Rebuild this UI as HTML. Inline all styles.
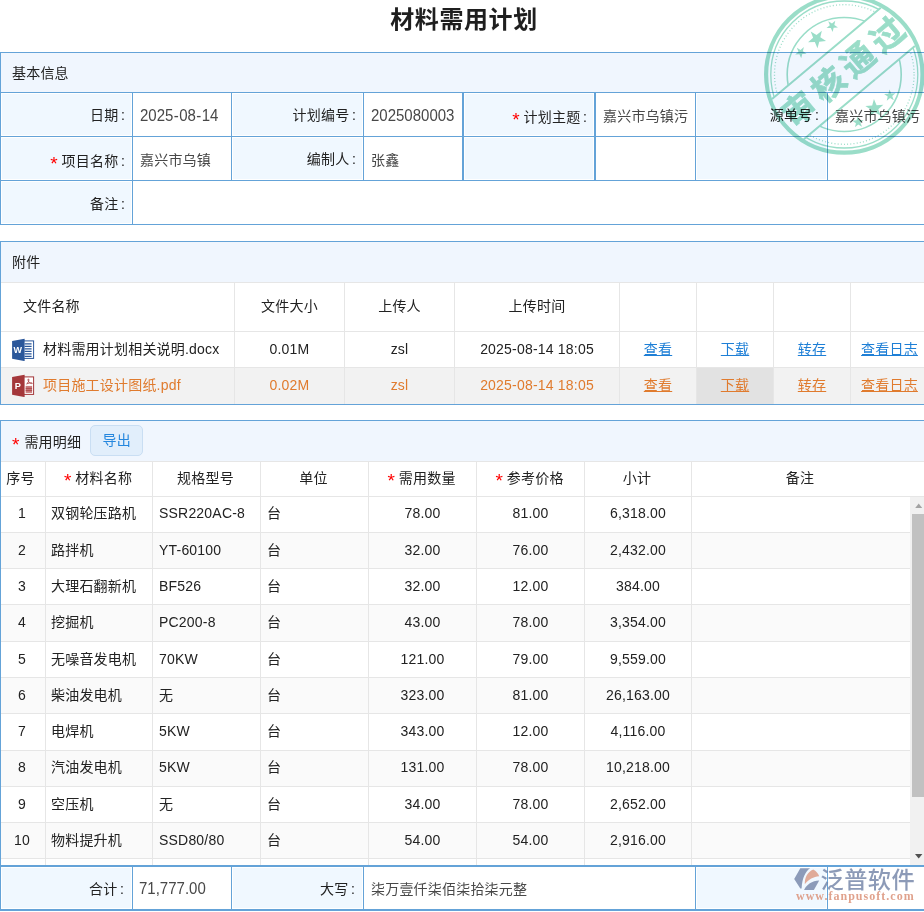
<!DOCTYPE html>
<html lang="zh-CN">
<head>
<meta charset="utf-8">
<title>材料需用计划</title>
<style>
*{box-sizing:border-box;margin:0;padding:0}
html,body{width:924px;height:912px;overflow:hidden;background:#fff}
body{position:relative;font-family:"Liberation Sans","Noto Sans CJK SC",sans-serif;font-size:14px;color:#222}
h1{position:absolute;left:2px;top:3.5px;width:924px;text-align:center;font-size:24px;line-height:32px;font-weight:bold;color:#1f1f1f;letter-spacing:.6px}
.ln{position:absolute;display:block}
.c{position:absolute;display:flex;align-items:center;white-space:nowrap;overflow:hidden;font-size:14px;line-height:20px;letter-spacing:.2px}
.ph{background:#f0f6fe;padding-left:12px;padding-top:2px;color:#222;border-bottom:1px solid #fff}
.req{color:#f00;font-family:"Liberation Sans",sans-serif;font-size:19px;line-height:20px;position:relative;top:3px;margin-right:4px;letter-spacing:0}
.co{margin-left:2.5px}
.hy{margin:0 .4px}
.fl,.fl2,.fl3{background:#f0f8ff;justify-content:flex-end;padding-right:6px;color:#222;border:1px solid #fff}
.fl2{padding-top:4px}
.fl3{padding-right:7px}
.fv{background:#fff;padding-left:7px;padding-top:2px;color:#484848}
.num{font-size:15px;letter-spacing:0;display:inline-block;transform:scaleY(1.09);transform-origin:50% 78%}
.ph.p0{padding-top:0}
.ah{justify-content:center;color:#222;background:#fff;padding-bottom:2px}
.ah.an{justify-content:flex-start;padding-left:22px}
.ar{justify-content:center;color:#222;background:#fff;padding-bottom:2px}
.ar.an2{justify-content:flex-start;padding-left:11px}
.ar a{color:#1e7fd6;text-decoration:underline}
.ar.hov{background:#f2f2f2;color:#e07b2e}
.ar.hov a{color:#e07b2e}
.ar.hov.dk{background:#e2e2e2}
.ic{flex:none;margin-right:8px}
.btn{display:inline-block;position:relative;top:-1px;margin-left:9px;width:53px;height:31px;line-height:29px;text-align:center;border:1px solid #c9def3;border-radius:5px;background:#e1eefb;color:#2587de}
.dh{justify-content:center;background:#fff;color:#222;padding-bottom:2px;padding-right:2px}
.dh.h0{padding-right:5px}
.dc{justify-content:center;padding-bottom:4px}
.dc.d0{padding-right:2px}
.dl{justify-content:flex-start;padding-left:6px;padding-bottom:4px}
.dl.d1{padding-left:5px}
</style>
</head>
<body>
<h1>材料需用计划</h1>
<div class="c ph" style="left:0px;top:52px;width:924px;height:41px;">基本信息</div>
<div class="c fl" style="left:1px;top:93px;width:131px;height:43px;"><span>日期<span class="co">:</span></span></div>
<div class="c fv" style="left:133px;top:93px;width:98px;height:43px;"><span class="num">2025<span class="hy">-</span>08<span class="hy">-</span>14</span></div>
<div class="c fl" style="left:232px;top:93px;width:131px;height:43px;"><span>计划编号<span class="co">:</span></span></div>
<div class="c fv" style="left:364px;top:93px;width:98px;height:43px;"><span class="num">2025080003</span></div>
<div class="c fl2" style="left:464px;top:93px;width:130px;height:43px;"><span class="req">*</span><span>计划主题<span class="co">:</span></span></div>
<div class="c fv" style="left:596px;top:93px;width:99px;height:43px;">嘉兴市乌镇污</div>
<div class="c fl3" style="left:696px;top:93px;width:131px;height:43px;"><span>源单号<span class="co">:</span></span></div>
<div class="c fv" style="left:828px;top:93px;width:96px;height:43px;">嘉兴市乌镇污</div>
<div class="c fl2" style="left:1px;top:137px;width:131px;height:43px;"><span class="req">*</span><span>项目名称<span class="co">:</span></span></div>
<div class="c fv" style="left:133px;top:137px;width:98px;height:43px;">嘉兴市乌镇</div>
<div class="c fl" style="left:232px;top:137px;width:131px;height:43px;"><span>编制人<span class="co">:</span></span></div>
<div class="c fv" style="left:364px;top:137px;width:98px;height:43px;">张鑫</div>
<div class="c fl" style="left:464px;top:137px;width:130px;height:43px;"></div>
<div class="c fv" style="left:596px;top:137px;width:99px;height:43px;"></div>
<div class="c fl" style="left:696px;top:137px;width:131px;height:43px;"></div>
<div class="c fv" style="left:828px;top:137px;width:96px;height:43px;"></div>
<div class="c fl" style="left:1px;top:181px;width:131px;height:43px;padding-top:2px"><span>备注<span class="co">:</span></span></div>
<div class="c fv" style="left:133px;top:181px;width:791px;height:43px;"></div>
<div class="ln" style="left:0px;top:52px;width:924px;height:1px;background:#64a3d8"></div>
<div class="ln" style="left:0px;top:92px;width:924px;height:1px;background:#64a3d8"></div>
<div class="ln" style="left:0px;top:136px;width:924px;height:1px;background:#64a3d8"></div>
<div class="ln" style="left:0px;top:180px;width:924px;height:1px;background:#64a3d8"></div>
<div class="ln" style="left:0px;top:224px;width:924px;height:1px;background:#64a3d8"></div>
<div class="ln" style="left:0px;top:52px;width:1px;height:173px;background:#64a3d8"></div>
<div class="ln" style="left:132px;top:93px;width:1px;height:131px;background:#64a3d8"></div>
<div class="ln" style="left:231px;top:93px;width:1px;height:87px;background:#64a3d8"></div>
<div class="ln" style="left:363px;top:93px;width:1px;height:87px;background:#64a3d8"></div>
<div class="ln" style="left:462px;top:93px;width:2px;height:87px;background:#64a3d8"></div>
<div class="ln" style="left:594px;top:93px;width:2px;height:87px;background:#64a3d8"></div>
<div class="ln" style="left:695px;top:93px;width:1px;height:87px;background:#64a3d8"></div>
<div class="ln" style="left:827px;top:93px;width:1px;height:87px;background:#64a3d8"></div>
<div class="c ph p0" style="left:0px;top:241px;width:924px;height:42px;">附件</div>
<div class="c ah an" style="left:1px;top:283px;width:233px;height:48px;">文件名称</div>
<div class="c ah" style="left:235px;top:283px;width:109px;height:48px;">文件大小</div>
<div class="c ah" style="left:345px;top:283px;width:109px;height:48px;">上传人</div>
<div class="c ah" style="left:455px;top:283px;width:164px;height:48px;">上传时间</div>
<div class="c ah" style="left:620px;top:283px;width:76px;height:48px;"></div>
<div class="c ah" style="left:697px;top:283px;width:76px;height:48px;"></div>
<div class="c ah" style="left:774px;top:283px;width:76px;height:48px;"></div>
<div class="c ah" style="left:851px;top:283px;width:77px;height:48px;"></div>
<div class="c ar an2" style="left:1px;top:332px;width:233px;height:36px;"><svg class="ic" width="23" height="24" viewBox="0 0 23 24"><g transform="translate(-.4 1.4)"><rect x="11" y="2.5" width="11" height="17.5" fill="#fff" stroke="#2b579a" stroke-width="1"/><g stroke="#2b579a" stroke-width="1.3"><path d="M13 5.5h7M13 8h7M13 10.5h7M13 13h7M13 15.5h7M13 18h7"/></g><path d="M0.5 2.6L13 0.3V22.7L0.5 20.4Z" fill="#2b579a"/><text x="6.3" y="14.9" font-family="Liberation Sans,sans-serif" font-weight="bold" font-size="9" fill="#fff" text-anchor="middle">W</text></g></svg><span class="fn">材料需用计划相关说明.docx</span></div>
<div class="c ar" style="left:235px;top:332px;width:109px;height:36px;">0.01M</div>
<div class="c ar" style="left:345px;top:332px;width:109px;height:36px;">zsl</div>
<div class="c ar" style="left:455px;top:332px;width:164px;height:36px;">2025-08-14 18:05</div>
<div class="c ar" style="left:620px;top:332px;width:76px;height:36px;"><a>查看</a></div>
<div class="c ar" style="left:697px;top:332px;width:76px;height:36px;"><a>下载</a></div>
<div class="c ar" style="left:774px;top:332px;width:76px;height:36px;"><a>转存</a></div>
<div class="c ar" style="left:851px;top:332px;width:77px;height:36px;"><a>查看日志</a></div>
<div class="c ar hov an2" style="left:1px;top:368px;width:233px;height:36px;"><svg class="ic" width="23" height="24" viewBox="0 0 23 24"><g transform="translate(-.4 1.4)"><rect x="11" y="2.5" width="11" height="17.5" fill="#fff" stroke="#a4373a" stroke-width="1"/><rect x="14" y="11.5" width="6.5" height="7" fill="#c9797b"/><path d="M14 14h6.5M14 16h6.5" stroke="#a4373a" stroke-width=".7"/><path d="M15 9.5c1.5-1 2.5-3 2.2-4.5c-.3-1-1.2-.3-.6 1.200c.6 1.500 1.800 2.700 3.400 3c1 .2 1-.8 0-.8c-1.600 0-3.500.4-5 1.100z" fill="none" stroke="#a4373a" stroke-width=".8"/><path d="M0.500 2.600L13 0.300V22.700L0.500 20.400Z" fill="#a4373a"/><text x="6.300" y="15" font-family="Liberation Sans,sans-serif" font-weight="bold" font-size="9.200" fill="#fff" text-anchor="middle">P</text></g></svg><span class="fn">项目施工设计图纸.pdf</span></div>
<div class="c ar hov" style="left:235px;top:368px;width:109px;height:36px;">0.02M</div>
<div class="c ar hov" style="left:345px;top:368px;width:109px;height:36px;">zsl</div>
<div class="c ar hov" style="left:455px;top:368px;width:164px;height:36px;">2025-08-14 18:05</div>
<div class="c ar hov" style="left:620px;top:368px;width:76px;height:36px;"><a>查看</a></div>
<div class="c ar hov dk" style="left:697px;top:368px;width:76px;height:36px;"><a>下载</a></div>
<div class="c ar hov" style="left:774px;top:368px;width:76px;height:36px;"><a>转存</a></div>
<div class="c ar hov" style="left:851px;top:368px;width:77px;height:36px;"><a>查看日志</a></div>
<div class="ln" style="left:0px;top:241px;width:924px;height:1px;background:#64a3d8"></div>
<div class="ln" style="left:0px;top:404px;width:924px;height:1px;background:#64a3d8"></div>
<div class="ln" style="left:0px;top:241px;width:1px;height:164px;background:#64a3d8"></div>
<div class="ln" style="left:1px;top:282px;width:923px;height:1px;background:#e6e6e6"></div>
<div class="ln" style="left:1px;top:331px;width:923px;height:1px;background:#e6e6e6"></div>
<div class="ln" style="left:1px;top:367px;width:923px;height:1px;background:#e6e6e6"></div>
<div class="ln" style="left:234px;top:283px;width:1px;height:121px;background:#e6e6e6"></div>
<div class="ln" style="left:344px;top:283px;width:1px;height:121px;background:#e6e6e6"></div>
<div class="ln" style="left:454px;top:283px;width:1px;height:121px;background:#e6e6e6"></div>
<div class="ln" style="left:619px;top:283px;width:1px;height:121px;background:#e6e6e6"></div>
<div class="ln" style="left:696px;top:283px;width:1px;height:121px;background:#e6e6e6"></div>
<div class="ln" style="left:773px;top:283px;width:1px;height:121px;background:#e6e6e6"></div>
<div class="ln" style="left:850px;top:283px;width:1px;height:121px;background:#e6e6e6"></div>
<div class="c ph" style="left:0px;top:420px;width:924px;height:42px;"><span class="req">*</span><span style="margin-left:1px">需用明细</span><span class="btn">导出</span></div>
<div class="c dh h0" style="left:1px;top:462px;width:44px;height:34px;">序号</div>
<div class="c dh h1" style="left:46px;top:462px;width:106px;height:34px;"><span class="req">*</span>材料名称</div>
<div class="c dh h2" style="left:153px;top:462px;width:107px;height:34px;">规格型号</div>
<div class="c dh h3" style="left:261px;top:462px;width:107px;height:34px;">单位</div>
<div class="c dh h4" style="left:369px;top:462px;width:107px;height:34px;"><span class="req">*</span>需用数量</div>
<div class="c dh h5" style="left:477px;top:462px;width:107px;height:34px;"><span class="req">*</span>参考价格</div>
<div class="c dh h6" style="left:585px;top:462px;width:106px;height:34px;">小计</div>
<div class="c dh h7" style="left:692px;top:462px;width:218px;height:34px;">备注</div>
<div class="c " style="left:1px;top:497px;width:909px;height:35px;background:#fff"></div>
<div class="c dc d0" style="left:1px;top:497px;width:44px;height:35px;">1</div>
<div class="c dl d1" style="left:46px;top:497px;width:106px;height:35px;">双钢轮压路机</div>
<div class="c dl d2" style="left:153px;top:497px;width:107px;height:35px;">SSR220AC-8</div>
<div class="c dl d3" style="left:261px;top:497px;width:107px;height:35px;">台</div>
<div class="c dc d4" style="left:369px;top:497px;width:107px;height:35px;">78.00</div>
<div class="c dc d5" style="left:477px;top:497px;width:107px;height:35px;">81.00</div>
<div class="c dc d6" style="left:585px;top:497px;width:106px;height:35px;">6,318.00</div>
<div class="c " style="left:1px;top:533px;width:909px;height:35px;background:#fafafa"></div>
<div class="c dc d0" style="left:1px;top:533px;width:44px;height:35px;padding-bottom:2px">2</div>
<div class="c dl d1" style="left:46px;top:533px;width:106px;height:35px;padding-bottom:2px">路拌机</div>
<div class="c dl d2" style="left:153px;top:533px;width:107px;height:35px;padding-bottom:2px">YT-60100</div>
<div class="c dl d3" style="left:261px;top:533px;width:107px;height:35px;padding-bottom:2px">台</div>
<div class="c dc d4" style="left:369px;top:533px;width:107px;height:35px;padding-bottom:2px">32.00</div>
<div class="c dc d5" style="left:477px;top:533px;width:107px;height:35px;padding-bottom:2px">76.00</div>
<div class="c dc d6" style="left:585px;top:533px;width:106px;height:35px;padding-bottom:2px">2,432.00</div>
<div class="c " style="left:1px;top:569px;width:909px;height:35px;background:#fff"></div>
<div class="c dc d0" style="left:1px;top:569px;width:44px;height:35px;padding-bottom:2px">3</div>
<div class="c dl d1" style="left:46px;top:569px;width:106px;height:35px;padding-bottom:2px">大理石翻新机</div>
<div class="c dl d2" style="left:153px;top:569px;width:107px;height:35px;padding-bottom:2px">BF526</div>
<div class="c dl d3" style="left:261px;top:569px;width:107px;height:35px;padding-bottom:2px">台</div>
<div class="c dc d4" style="left:369px;top:569px;width:107px;height:35px;padding-bottom:2px">32.00</div>
<div class="c dc d5" style="left:477px;top:569px;width:107px;height:35px;padding-bottom:2px">12.00</div>
<div class="c dc d6" style="left:585px;top:569px;width:106px;height:35px;padding-bottom:2px">384.00</div>
<div class="c " style="left:1px;top:605px;width:909px;height:36px;background:#fafafa"></div>
<div class="c dc d0" style="left:1px;top:605px;width:44px;height:36px;padding-bottom:2px">4</div>
<div class="c dl d1" style="left:46px;top:605px;width:106px;height:36px;padding-bottom:2px">挖掘机</div>
<div class="c dl d2" style="left:153px;top:605px;width:107px;height:36px;padding-bottom:2px">PC200-8</div>
<div class="c dl d3" style="left:261px;top:605px;width:107px;height:36px;padding-bottom:2px">台</div>
<div class="c dc d4" style="left:369px;top:605px;width:107px;height:36px;padding-bottom:2px">43.00</div>
<div class="c dc d5" style="left:477px;top:605px;width:107px;height:36px;padding-bottom:2px">78.00</div>
<div class="c dc d6" style="left:585px;top:605px;width:106px;height:36px;padding-bottom:2px">3,354.00</div>
<div class="c " style="left:1px;top:642px;width:909px;height:35px;background:#fff"></div>
<div class="c dc d0" style="left:1px;top:642px;width:44px;height:35px;padding-bottom:2px">5</div>
<div class="c dl d1" style="left:46px;top:642px;width:106px;height:35px;padding-bottom:2px">无噪音发电机</div>
<div class="c dl d2" style="left:153px;top:642px;width:107px;height:35px;padding-bottom:2px">70KW</div>
<div class="c dl d3" style="left:261px;top:642px;width:107px;height:35px;padding-bottom:2px">台</div>
<div class="c dc d4" style="left:369px;top:642px;width:107px;height:35px;padding-bottom:2px">121.00</div>
<div class="c dc d5" style="left:477px;top:642px;width:107px;height:35px;padding-bottom:2px">79.00</div>
<div class="c dc d6" style="left:585px;top:642px;width:106px;height:35px;padding-bottom:2px">9,559.00</div>
<div class="c " style="left:1px;top:678px;width:909px;height:35px;background:#fafafa"></div>
<div class="c dc d0" style="left:1px;top:678px;width:44px;height:35px;padding-bottom:2px">6</div>
<div class="c dl d1" style="left:46px;top:678px;width:106px;height:35px;padding-bottom:2px">柴油发电机</div>
<div class="c dl d2" style="left:153px;top:678px;width:107px;height:35px;padding-bottom:2px">无</div>
<div class="c dl d3" style="left:261px;top:678px;width:107px;height:35px;padding-bottom:2px">台</div>
<div class="c dc d4" style="left:369px;top:678px;width:107px;height:35px;padding-bottom:2px">323.00</div>
<div class="c dc d5" style="left:477px;top:678px;width:107px;height:35px;padding-bottom:2px">81.00</div>
<div class="c dc d6" style="left:585px;top:678px;width:106px;height:35px;padding-bottom:2px">26,163.00</div>
<div class="c " style="left:1px;top:714px;width:909px;height:36px;background:#fff"></div>
<div class="c dc d0" style="left:1px;top:714px;width:44px;height:36px;padding-bottom:2px">7</div>
<div class="c dl d1" style="left:46px;top:714px;width:106px;height:36px;padding-bottom:2px">电焊机</div>
<div class="c dl d2" style="left:153px;top:714px;width:107px;height:36px;padding-bottom:2px">5KW</div>
<div class="c dl d3" style="left:261px;top:714px;width:107px;height:36px;padding-bottom:2px">台</div>
<div class="c dc d4" style="left:369px;top:714px;width:107px;height:36px;padding-bottom:2px">343.00</div>
<div class="c dc d5" style="left:477px;top:714px;width:107px;height:36px;padding-bottom:2px">12.00</div>
<div class="c dc d6" style="left:585px;top:714px;width:106px;height:36px;padding-bottom:2px">4,116.00</div>
<div class="c " style="left:1px;top:751px;width:909px;height:35px;background:#fafafa"></div>
<div class="c dc d0" style="left:1px;top:751px;width:44px;height:35px;">8</div>
<div class="c dl d1" style="left:46px;top:751px;width:106px;height:35px;">汽油发电机</div>
<div class="c dl d2" style="left:153px;top:751px;width:107px;height:35px;">5KW</div>
<div class="c dl d3" style="left:261px;top:751px;width:107px;height:35px;">台</div>
<div class="c dc d4" style="left:369px;top:751px;width:107px;height:35px;">131.00</div>
<div class="c dc d5" style="left:477px;top:751px;width:107px;height:35px;">78.00</div>
<div class="c dc d6" style="left:585px;top:751px;width:106px;height:35px;">10,218.00</div>
<div class="c " style="left:1px;top:787px;width:909px;height:35px;background:#fff"></div>
<div class="c dc d0" style="left:1px;top:787px;width:44px;height:35px;padding-bottom:2px">9</div>
<div class="c dl d1" style="left:46px;top:787px;width:106px;height:35px;padding-bottom:2px">空压机</div>
<div class="c dl d2" style="left:153px;top:787px;width:107px;height:35px;padding-bottom:2px">无</div>
<div class="c dl d3" style="left:261px;top:787px;width:107px;height:35px;padding-bottom:2px">台</div>
<div class="c dc d4" style="left:369px;top:787px;width:107px;height:35px;padding-bottom:2px">34.00</div>
<div class="c dc d5" style="left:477px;top:787px;width:107px;height:35px;padding-bottom:2px">78.00</div>
<div class="c dc d6" style="left:585px;top:787px;width:106px;height:35px;padding-bottom:2px">2,652.00</div>
<div class="c " style="left:1px;top:823px;width:909px;height:35px;background:#fafafa"></div>
<div class="c dc d0" style="left:1px;top:823px;width:44px;height:35px;padding-bottom:2px">10</div>
<div class="c dl d1" style="left:46px;top:823px;width:106px;height:35px;padding-bottom:2px">物料提升机</div>
<div class="c dl d2" style="left:153px;top:823px;width:107px;height:35px;padding-bottom:2px">SSD80/80</div>
<div class="c dl d3" style="left:261px;top:823px;width:107px;height:35px;padding-bottom:2px">台</div>
<div class="c dc d4" style="left:369px;top:823px;width:107px;height:35px;padding-bottom:2px">54.00</div>
<div class="c dc d5" style="left:477px;top:823px;width:107px;height:35px;padding-bottom:2px">54.00</div>
<div class="c dc d6" style="left:585px;top:823px;width:106px;height:35px;padding-bottom:2px">2,916.00</div>
<div class="c " style="left:1px;top:859px;width:909px;height:6px;background:#fff"></div>
<div class="ln" style="left:0px;top:420px;width:924px;height:1px;background:#64a3d8"></div>
<div class="ln" style="left:0px;top:420px;width:1px;height:491px;background:#64a3d8"></div>
<div class="ln" style="left:1px;top:461px;width:923px;height:1px;background:#e6e6e6"></div>
<div class="ln" style="left:1px;top:496px;width:923px;height:1px;background:#e6e6e6"></div>
<div class="ln" style="left:1px;top:532px;width:909px;height:1px;background:#e6e6e6"></div>
<div class="ln" style="left:1px;top:568px;width:909px;height:1px;background:#e6e6e6"></div>
<div class="ln" style="left:1px;top:604px;width:909px;height:1px;background:#e6e6e6"></div>
<div class="ln" style="left:1px;top:641px;width:909px;height:1px;background:#e6e6e6"></div>
<div class="ln" style="left:1px;top:677px;width:909px;height:1px;background:#e6e6e6"></div>
<div class="ln" style="left:1px;top:713px;width:909px;height:1px;background:#e6e6e6"></div>
<div class="ln" style="left:1px;top:750px;width:909px;height:1px;background:#e6e6e6"></div>
<div class="ln" style="left:1px;top:786px;width:909px;height:1px;background:#e6e6e6"></div>
<div class="ln" style="left:1px;top:822px;width:909px;height:1px;background:#e6e6e6"></div>
<div class="ln" style="left:1px;top:858px;width:909px;height:1px;background:#e6e6e6"></div>
<div class="ln" style="left:45px;top:462px;width:1px;height:403px;background:#e6e6e6"></div>
<div class="ln" style="left:152px;top:462px;width:1px;height:403px;background:#e6e6e6"></div>
<div class="ln" style="left:260px;top:462px;width:1px;height:403px;background:#e6e6e6"></div>
<div class="ln" style="left:368px;top:462px;width:1px;height:403px;background:#e6e6e6"></div>
<div class="ln" style="left:476px;top:462px;width:1px;height:403px;background:#e6e6e6"></div>
<div class="ln" style="left:584px;top:462px;width:1px;height:403px;background:#e6e6e6"></div>
<div class="ln" style="left:691px;top:462px;width:1px;height:403px;background:#e6e6e6"></div>
<div class="c " style="left:910px;top:497px;width:14px;height:368px;background:#f1f1f1"></div>
<div class="c " style="left:912px;top:514px;width:12px;height:283px;background:#c1c1c1"></div>
<svg class="ln" style="left:910px;top:497px" width="14" height="17" viewBox="0 0 14 17"><path d="M5.2 11h7L8.700 6.500z" fill="#a3a3a3"/></svg>
<svg class="ln" style="left:910px;top:848px" width="14" height="17" viewBox="0 0 14 17"><path d="M5 6h7.400L8.700 10.500z" fill="#505050"/></svg>
<div class="c fl" style="left:1px;top:867px;width:131px;height:42px;padding-top:2px;padding-right:7px"><span>合计<span class="co">:</span></span></div>
<div class="c fv" style="left:133px;top:867px;width:98px;height:42px;padding-left:6px"><span class="num">71,777.00</span></div>
<div class="c fl" style="left:232px;top:867px;width:131px;height:42px;padding-top:2px;padding-right:7px"><span>大写<span class="co">:</span></span></div>
<div class="c fv" style="left:364px;top:867px;width:331px;height:42px;">柒万壹仟柒佰柒拾柒元整</div>
<div class="c fl" style="left:696px;top:867px;width:131px;height:42px;"></div>
<div class="c fv" style="left:828px;top:867px;width:96px;height:42px;"></div>
<div class="ln" style="left:0px;top:865px;width:924px;height:2px;background:#64a3d8"></div>
<div class="ln" style="left:0px;top:909px;width:924px;height:2px;background:#64a3d8"></div>
<div class="ln" style="left:0px;top:865px;width:1px;height:46px;background:#64a3d8"></div>
<div class="ln" style="left:132px;top:867px;width:1px;height:42px;background:#64a3d8"></div>
<div class="ln" style="left:231px;top:867px;width:1px;height:42px;background:#64a3d8"></div>
<div class="ln" style="left:363px;top:867px;width:1px;height:42px;background:#64a3d8"></div>
<div class="ln" style="left:695px;top:867px;width:1px;height:42px;background:#64a3d8"></div>
<div class="ln" style="left:827px;top:867px;width:1px;height:42px;background:#64a3d8"></div>
<svg class="ln" style="left:756px;top:-10px;opacity:.6;mix-blend-mode:multiply" width="168" height="176" viewBox="756 -10 168 176">
<defs><mask id="bm" maskUnits="userSpaceOnUse" x="740" y="-20" width="200" height="200"><rect x="740" y="-20" width="200" height="200" fill="#fff"/><rect x="-80" y="-27.7" width="160" height="51.3" fill="#000" transform="translate(844.2 74.5) rotate(-40)"/></mask></defs>
<g fill="none" stroke="#56c7a3">
<circle cx="844.3" cy="74.5" r="78.2" stroke-width="4.200"/>
<g mask="url(#bm)">
<circle cx="844.3" cy="74.5" r="73.500" stroke-width="1.300"/>
<circle cx="844.3" cy="74.5" r="69.800" stroke-width="1.300" stroke-dasharray="1 2.200"/>
<circle cx="844.2" cy="74.5" r="57" stroke-width="1.600"/>
</g>
<g transform="translate(844.2 74.5) rotate(-40)" stroke-width="2">
<path d="M-71 -27.7H71M-72.500 23.600H72.500"/>
</g>
</g>
<g transform="translate(844.2 74.5) rotate(-40)" fill="#56c7a3">
<polygon points="-19.0,-51.0 -17.6,-46.9 -13.3,-46.9 -16.7,-44.3 -15.5,-40.1 -19.0,-42.6 -22.5,-40.1 -21.3,-44.3 -24.7,-46.9 -20.4,-46.9"/><polygon points="2.0,-54.5 4.2,-48.1 11.0,-47.9 5.6,-43.8 7.6,-37.3 2.0,-41.2 -3.6,-37.3 -1.6,-43.8 -7.0,-47.9 -0.2,-48.1"/><polygon points="22.0,-51.0 23.4,-46.9 27.7,-46.9 24.3,-44.3 25.5,-40.1 22.0,-42.6 18.5,-40.1 19.7,-44.3 16.3,-46.9 20.6,-46.9"/><polygon points="-20.0,51.5 -21.4,47.4 -25.7,47.4 -22.3,44.8 -23.5,40.6 -20.0,43.1 -16.5,40.6 -17.7,44.8 -14.3,47.4 -18.6,47.4"/><polygon points="1.5,55.0 -0.7,48.6 -7.5,48.4 -2.1,44.3 -4.1,37.8 1.5,41.7 7.1,37.8 5.1,44.3 10.5,48.4 3.7,48.6"/><polygon points="21.5,51.5 20.1,47.4 15.8,47.4 19.2,44.8 18.0,40.6 21.5,43.1 25.0,40.6 23.8,44.8 27.2,47.4 22.9,47.4"/>
<text x="3.500" y="9.500" text-anchor="middle" font-family="'Noto Sans CJK SC',sans-serif" font-weight="700" font-size="33" letter-spacing="5.500" stroke="#56c7a3" stroke-width=".7">审核通过</text>
</g>
</svg>
<svg class="ln" style="left:790px;top:864px" width="134" height="48" viewBox="790 864 134 48">
<g opacity=".8">
<path d="M794.2 878.9L800.3 868.3H810.1C805.5 871.5 802.3 877.5 801.6 888.4H800.3Z" fill="#7485a8"/>
<path d="M813.2 869.5C816.2 871 818.3 873.5 819.2 876.3C813.5 876.6 808.5 879.5 804.8 884.2C804.6 877.5 807.5 872 813.2 869.5Z" fill="#dd9880"/>
<path d="M804 889.900C806.500 884.500 812 880.800 819.200 880.500L813.900 889.900Z" fill="#7485a8"/>
</g>
<text x="820.500" y="888.200" font-family="'Noto Sans CJK SC',sans-serif" font-weight="500" font-size="23.200" fill="#7485a8" opacity=".82" letter-spacing=".45">泛普软件</text>
<text x="796" y="899.600" font-family="'Liberation Serif',serif" font-weight="bold" font-size="12" fill="#dd9880" opacity=".9" letter-spacing="1.02">www.fanpusoft.com</text>
</svg>

</body>
</html>
